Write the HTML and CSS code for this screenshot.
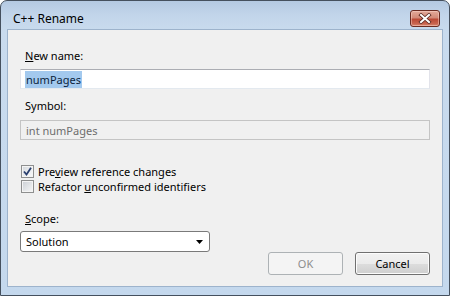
FILE: index.html
```html
<!DOCTYPE html>
<html>
<head>
<meta charset="utf-8">
<link rel="stylesheet" href="styles.css">
</head>
<body>
<div class="window">
  <div class="titlebar">
    <span class="title">C++ Rename</span>
    <button class="close" aria-label="Close">
      <svg width="14" height="11" viewBox="0 0 14 11">
        <path d="M3 2 L11 9 M11 2 L3 9" stroke="#5a2820" stroke-width="3.6" stroke-linecap="square"/>
        <path d="M3 2 L11 9 M11 2 L3 9" stroke="#ffffff" stroke-width="2" stroke-linecap="square"/>
      </svg>
    </button>
  </div>
  <div class="client">
    <div class="label first"><u>N</u>ew name:</div>
    <div class="textbox"><span class="sel">numPages</span></div>
    <div class="label second">Symbol:</div>
    <div class="textbox disabled">int numPages</div>
    <div class="checks">
      <div class="check">
        <span class="box checked">
          <svg width="9" height="9" viewBox="0 0 9 9"><path d="M1 4.5 L3.5 7.5 L8 0.8" fill="none" stroke="#2a3f6e" stroke-width="1.8"/></svg>
        </span>
        <span>Pre<u>v</u>iew reference changes</span>
      </div>
      <div class="check">
        <span class="box"></span>
        <span>Refactor <u>u</u>nconfirmed identifiers</span>
      </div>
    </div>
    <div class="bottom">
      <div class="scope">
        <div class="label"><u>S</u>cope:</div>
        <div class="select">
          <span>Solution</span>
          <svg width="7" height="4" viewBox="0 0 7 4"><path d="M0 0 H7 L3.5 4 Z" fill="#000"/></svg>
        </div>
      </div>
      <div class="buttons">
        <button class="btn" disabled>OK</button>
        <button class="btn">Cancel</button>
      </div>
    </div>
  </div>
</div>
</body>
</html>
```

FILE: styles.css
```css
html, body {
  margin: 0;
  padding: 0;
  background: #ffffff;
}
body {
  font-family: "Noto Sans", "Open Sans", sans-serif;
  font-size: 11px;
  color: #000;
}
.window {
  width: 450px;
  height: 296px;
  box-sizing: border-box;
  border: 1px solid #45505e;
  border-radius: 7px 7px 0 0;
  background: linear-gradient(180deg, #b4c9e2 0px, #c2d5ea 14px, #c9dbee 30px, #c4d8ed 100%);
  padding: 0 7px 9px 7px;
  display: flex;
  flex-direction: column;
}
.titlebar {
  height: 29px;
  display: flex;
  justify-content: space-between;
  align-items: flex-start;
}
.title {
  padding: 10px 0 0 5px;
  line-height: 15px;
  font-size: 12px;
  color: #000;
}
.close {
  margin: 9px 2px 0 0;
  width: 30px;
  height: 17px;
  padding: 0;
  border: 1px solid #6a2c22;
  border-radius: 3px;
  background: linear-gradient(180deg, #e3aa9a 0%, #d38a78 45%, #bb4a36 55%, #c9654f 85%, #d98a72 100%);
  box-shadow: inset 0 0 0 1px rgba(255,220,210,0.45);
  display: flex;
  align-items: center;
  justify-content: center;
}
.client {
  flex: 1;
  background: #f0f0f0;
  outline: 1px solid #9db3cc;
  padding: 18px 12px 0 12px;
  display: flex;
  flex-direction: column;
}
.label {
  line-height: 15px;
  height: 15px;
  margin-left: 5px;
}
.label.second {
  margin-top: 9px;
}
.textbox {
  margin-top: 6px;
  height: 20px;
  box-sizing: border-box;
  background: #fff;
  border: 1px solid #e2e3ea;
  border-top-color: #abadb3;
  border-bottom-color: #e3e9ef;
  padding: 2px 0 0 5px;
  line-height: 15px;
}
.label.second + .textbox {
  margin-top: 7px;
}
.sel {
  background: #a3c9ee;
  color: #0b1f3c;
  padding: 1px 1px 1px 1px;
  margin-left: -1px;
}
.textbox.disabled {
  background: #f0f0f0;
  border: 1px solid #c4c4c4;
  color: #6d6d6d;
  padding-left: 5px;
}
.checks {
  margin-top: 24px;
  display: flex;
  flex-direction: column;
}
.check {
  display: flex;
  align-items: center;
  height: 15px;
  line-height: 15px;
  margin-left: 1px;
  gap: 4px;
}
.box {
  width: 13px;
  height: 13px;
  box-sizing: border-box;
  border: 1px solid #8e8f8f;
  background: linear-gradient(135deg, #cbcfd5 0%, #e6e8ea 60%, #f6f6f6 100%);
  box-shadow: inset 0 0 0 1px #f4f4f4;
  display: flex;
  align-items: center;
  justify-content: center;
}
.box.checked {
  background: linear-gradient(135deg, #d3d7dc 0%, #eceef0 60%, #fafafa 100%);
}
.bottom {
  margin-top: 17px;
  display: flex;
  justify-content: space-between;
  align-items: flex-start;
}
.scope {
  display: flex;
  flex-direction: column;
}
.select {
  margin-top: 5px;
  width: 190px;
  height: 21px;
  box-sizing: border-box;
  background: #fff;
  border: 1px solid #7a7a7a;
  border-radius: 3px;
  display: flex;
  align-items: center;
  justify-content: space-between;
  padding: 0 6px 0 5px;
  line-height: 15px;
}
.buttons {
  margin-top: 41px;
  display: flex;
  gap: 12px;
}
.btn {
  width: 75px;
  height: 23px;
  box-sizing: border-box;
  font-family: "Noto Sans", "Open Sans", sans-serif;
  font-size: 11px;
  color: #000;
  border: 1px solid #707070;
  border-radius: 3px;
  background: linear-gradient(180deg, #f2f2f2 0%, #ebebeb 50%, #dddddd 51%, #cfcfcf 100%);
  box-shadow: inset 0 0 0 1px #fcfcfc;
  padding: 0;
  line-height: 15px;
}
.btn:disabled {
  color: #8d8d8d;
  border-color: #adb2b5;
  background: #f4f4f4;
  box-shadow: none;
}
```
